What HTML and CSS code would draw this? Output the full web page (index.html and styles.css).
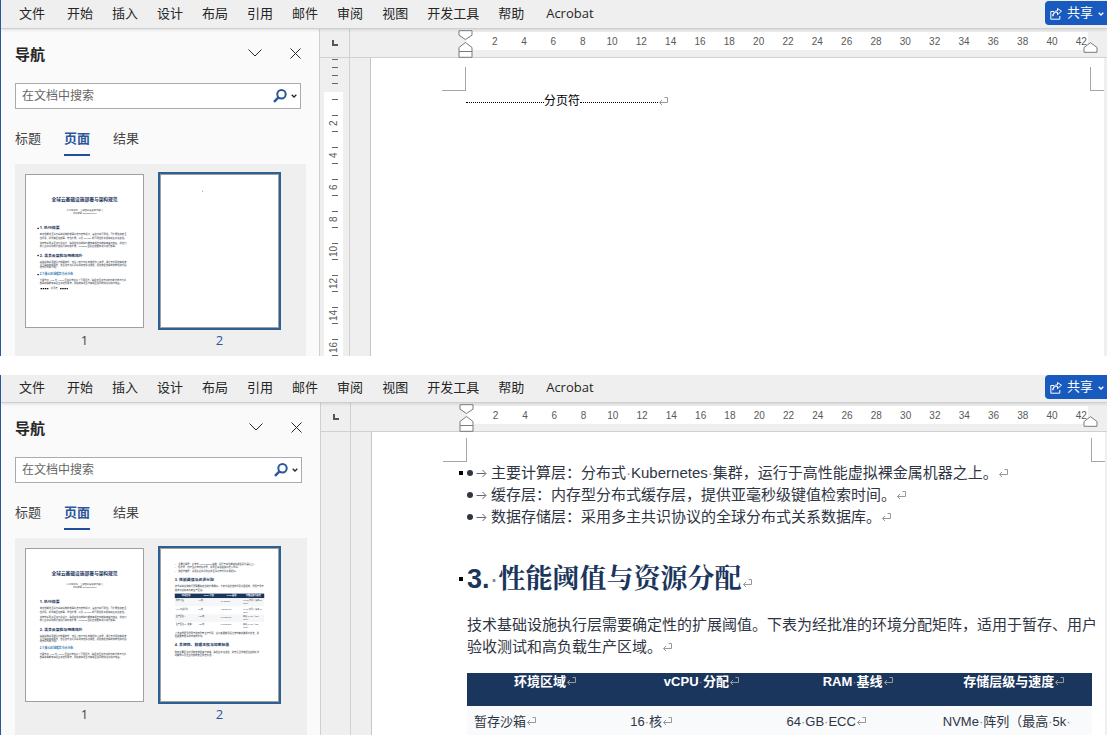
FILE: index.html
```html
<!DOCTYPE html>
<html lang="zh-CN">
<head>
  <meta charset="UTF-8">
  <meta name="viewport" content="width=device-width, initial-scale=1.0">
  <title>导航</title>
  <link rel="stylesheet" href="styles.css">
</head>
<body>
  <!-- Shared icons and the first page preview -->
  <svg class="defs" aria-hidden="true">
    <symbol id="return" viewBox="0 0 10 9">
      <path d="M6.500 .5h3v5h-8M4 3L1.500 5.500 4 8" fill="none" stroke="currentColor"/>
    </symbol>
    <symbol id="tab-arrow" viewBox="0 0 11 9">
      <path d="M.5 4.500h9M6.500 1l3.500 3.500L6.500 8" fill="none" stroke="currentColor"/>
    </symbol>
    <symbol id="chevron" viewBox="0 0 14 8">
      <path d="M.5 .5L7 7 13.500 .5" fill="none" stroke="currentColor"/>
    </symbol>
    <symbol id="caret" viewBox="0 0 6 4">
      <path d="M.7 .7L3 3 5.300 .7" fill="none" stroke="currentColor" stroke-width="1.300"/>
    </symbol>
    <symbol id="close" viewBox="0 0 11 11">
      <path d="M.5 .5l10 10M10.500 .5l-10 10" fill="none" stroke="currentColor"/>
    </symbol>
    <symbol id="search" viewBox="0 0 14 14">
      <circle cx="8.500" cy="5.300" r="4.200" fill="none" stroke="currentColor" stroke-width="2"/>
      <path d="M5.500 8.300L1 12.800" fill="none" stroke="currentColor" stroke-width="2.400"/>
    </symbol>
    <symbol id="share" viewBox="0 0 12 12">
      <path d="M4 3.500H.8v7.700h9V8M2.800 8.200c.3-2.700 2-4 4.700-4V6.700l4-3.500-4-2.700v2.200c-3 .2-4.500 2.300-4.700 5.500z" fill="none" stroke="currentColor"/>
    </symbol>
    <symbol id="indent-left" viewBox="0 0 15 28">
      <path d="M1 .7h13v4.500L7.500 9.500 1 5.200zM7.500 12.500L14 17.500v4H1v-4zM1 21.500h13v5.800H1z" fill="#fff" stroke="#7a7a7a"/>
    </symbol>
    <symbol id="indent-right" viewBox="0 0 15 11">
      <path d="M7.500 .7L14 5.500v4.800H1V5.500z" fill="#fff" stroke="#7a7a7a"/>
    </symbol>
    <symbol id="page-one" viewBox="0 0 816 1056">
      <g class="mini-heading">
        <text x="408" y="180" font-size="33" text-anchor="middle">全球云基础设施部署与架构规范</text>
        <text x="96" y="376" font-size="27">1. 执行摘要</text>
        <text x="96" y="567" font-size="27">2. 混合云架构与网络拓扑</text>
      </g>
      <text class="mini-subheading" x="96" y="697" font-size="20">2.1 核心区域服务节点分布</text>
      <g class="mini-text">
        <text x="408" y="252" text-anchor="middle" font-style="italic">企业级文档、全球基础设施架构部门</text>
        <text x="408" y="273" text-anchor="middle" font-style="italic">文档版本 Infrastructure</text>
        <text x="96" y="419">本文档概述全球云基础设施的部署标准与架构规范，旨在为高可用性、可扩展性和安全</text>
        <text x="96" y="447">性环境，提供跨区域部署、弹性扩展，以及 99.99% 的可用性服务保障和业务连续性。</text>
        <text x="96" y="479">该架构采用多区域冗余设计，确保在单点故障时能够实现自动故障转移与恢复，并支持</text>
        <text x="96" y="502">核心业务系统的持续运行和动态扩展，DevOps 团队应遵循本规范进行部署。</text>
        <text x="96" y="609">基础设施采用混合云部署模式，结合公有云与私有数据中心资源，通过专线网络实现安</text>
        <text x="96" y="630">全互联和数据同步，各区域节点之间采用加密隧道通信，保证数据传输的完整性和低延</text>
        <text x="96" y="650">迟访问与高可用。</text>
        <text x="96" y="734">计算节点 AWS 与 Azure 区域分布在多个可用区内，确保各区域节点的负载均衡与冗余</text>
        <text x="96" y="756">部署策略能够满足业务增长需求，并在故障发生时实现区域间的快速切换与恢复。</text>
      </g>
    </symbol>
  </svg>

  <!-- Window with the page break -->
  <section class="window">
    <header class="ribbon">
      <nav class="menu">
        <a href="#">文件</a>
        <a href="#">开始</a>
        <a href="#">插入</a>
        <a href="#">设计</a>
        <a href="#">布局</a>
        <a href="#">引用</a>
        <a href="#">邮件</a>
        <a href="#">审阅</a>
        <a href="#">视图</a>
        <a href="#">开发工具</a>
        <a href="#">帮助</a>
        <a href="#">Acrobat</a>
      </nav>
      <button class="share"><svg width="12" height="12"><use href="#share"/></svg>共享<svg width="6" height="4"><use href="#caret"/></svg></button>
    </header>

    <div class="workspace">
      <aside class="pane">
        <div class="pane-head">
          <h2>导航</h2>
          <button class="icon-button" aria-label="选项"><svg width="14" height="8"><use href="#chevron"/></svg></button>
          <button class="icon-button" aria-label="关闭"><svg width="11" height="11"><use href="#close"/></svg></button>
        </div>
        <div class="search">
          <input type="text" placeholder="在文档中搜索" aria-label="在文档中搜索">
          <button class="search-button" aria-label="搜索"><svg width="14" height="14"><use href="#search"/></svg></button>
          <button class="search-more" aria-label="搜索选项"><svg width="6" height="4"><use href="#caret"/></svg></button>
        </div>
        <div class="tabs" role="tablist">
          <button role="tab" class="tab">标题</button>
          <button role="tab" class="tab active" aria-selected="true">页面</button>
          <button role="tab" class="tab">结果</button>
        </div>
        <div class="thumbs">
          <figure class="thumb">
            <svg class="sheet" viewBox="0 0 816 1056">
              <use href="#page-one"/>
              <g fill="#000">
                <rect x="80" y="366" width="9" height="9"/>
                <rect x="80" y="555" width="9" height="9"/>
                <rect x="80" y="688" width="9" height="9"/>
              </g>
              <path d="M102 790h54M238 790h54" stroke="#000" stroke-width="9" stroke-dasharray="10 5"/>
              <text class="mini-text" x="172" y="796">分页符</text>
            </svg>
            <figcaption>1</figcaption>
          </figure>
          <figure class="thumb current">
            <svg class="sheet" viewBox="0 0 816 1056">
              <rect x="286" y="108" width="8" height="6" fill="#888"/>
            </svg>
            <figcaption>2</figcaption>
          </figure>
        </div>
      </aside>

      <main class="editor">
        <div class="tab-stop"><i></i></div>
        <div class="ruler">
          <ol class="ruler-track">
            <li>2</li><li>4</li><li>6</li><li>8</li><li>10</li><li>12</li><li>14</li>
            <li>16</li><li>18</li><li>20</li><li>22</li><li>24</li><li>26</li><li>28</li>
            <li>30</li><li>32</li><li>34</li><li>36</li><li>38</li><li>40</li><li>42</li>
          </ol>
          <svg class="indent-left" width="15" height="28"><use href="#indent-left"/></svg>
          <svg class="indent-right" width="15" height="11"><use href="#indent-right"/></svg>
        </div>
        <div class="side-ruler">
          <div class="side-margin"></div>
          <ol class="side-track">
            <li>2</li>
            <li>4</li>
            <li>6</li>
            <li>8</li>
            <li>10</li>
            <li>12</li>
            <li>14</li>
            <li>16</li>
          </ol>
        </div>
        <div class="canvas">
          <article class="page">
            <div class="crop-marks"><i class="crop left"></i><i class="crop right"></i></div>
            <div class="content">
              <p class="page-break"><span>分页符</span><svg class="mark" width="10" height="9"><use href="#return"/></svg></p>
            </div>
          </article>
        </div>
      </main>
    </div>
  </section>

  <!-- Window with the following page -->
  <section class="window second">
    <header class="ribbon">
      <nav class="menu">
        <a href="#">文件</a>
        <a href="#">开始</a>
        <a href="#">插入</a>
        <a href="#">设计</a>
        <a href="#">布局</a>
        <a href="#">引用</a>
        <a href="#">邮件</a>
        <a href="#">审阅</a>
        <a href="#">视图</a>
        <a href="#">开发工具</a>
        <a href="#">帮助</a>
        <a href="#">Acrobat</a>
      </nav>
      <button class="share"><svg width="12" height="12"><use href="#share"/></svg>共享<svg width="6" height="4"><use href="#caret"/></svg></button>
    </header>

    <div class="workspace">
      <aside class="pane">
        <div class="pane-head">
          <h2>导航</h2>
          <button class="icon-button" aria-label="选项"><svg width="14" height="8"><use href="#chevron"/></svg></button>
          <button class="icon-button" aria-label="关闭"><svg width="11" height="11"><use href="#close"/></svg></button>
        </div>
        <div class="search">
          <input type="text" placeholder="在文档中搜索" aria-label="在文档中搜索">
          <button class="search-button" aria-label="搜索"><svg width="14" height="14"><use href="#search"/></svg></button>
          <button class="search-more" aria-label="搜索选项"><svg width="6" height="4"><use href="#caret"/></svg></button>
        </div>
        <div class="tabs" role="tablist">
          <button role="tab" class="tab">标题</button>
          <button role="tab" class="tab active" aria-selected="true">页面</button>
          <button role="tab" class="tab">结果</button>
        </div>
        <div class="thumbs">
          <figure class="thumb">
            <svg class="sheet" viewBox="0 0 816 1056"><use href="#page-one"/></svg>
            <figcaption>1</figcaption>
          </figure>
          <figure class="thumb current">
            <svg class="sheet" viewBox="0 0 816 1056">
              <g class="mini-text">
                <text x="96" y="113">•</text><text x="120" y="113">主要计算层：分布式 Kubernetes 集群，运行于高性能虚拟裸金属机器之上。</text>
                <text x="96" y="132">•</text><text x="120" y="132">缓存层：内存型分布式缓存层，提供亚毫秒级键值检索时间。</text>
                <text x="96" y="158">•</text><text x="120" y="158">数据存储层：采用多主共识协议的全球分布式关系数据库。</text>
                <text x="96" y="262">技术基础设施执行层需要确定性的扩展阈值。下表为经批准的环境分配矩阵，适用于暂存</text>
                <text x="96" y="289">验收测试和高负载生产区域。</text>
              </g>
              <rect x="96" y="309" width="624" height="32" fill="#1b365d"/>
              <path d="M96 341h624v56H96zM96 453h624v54H96z" fill="#f5f6f8"/>
              <g fill="#fff" font-size="15" font-weight="700">
                <text x="145" y="325">环境区域</text><text x="296" y="325">vCPU 分配</text>
                <text x="458" y="325">RAM 基线</text><text x="592" y="325">存储层级与速度</text>
              </g>
              <g class="mini-text mini-cells">
                <text x="103" y="364">暂存沙箱</text><text x="260" y="364">16 核</text><text x="416" y="370">64 GB ECC</text><text x="572" y="364">NVMe 阵列（最高 5k</text><text x="572" y="385">IOPS）</text>
                <text x="103" y="420">UAT 测试环境</text><text x="260" y="420">32 核</text><text x="416" y="426">128 GB ECC</text><text x="572" y="420">NVMe 阵列（最高 9k</text><text x="572" y="441">IOPS）</text>
                <text x="103" y="474">生产区域 A</text><text x="260" y="474">128 核</text><text x="416" y="480">512 GB ECC</text><text x="572" y="474">高速 NVMe（50k</text><text x="572" y="495">IOPS）</text>
                <text x="103" y="525">生产区域 B（灾备）</text><text x="260" y="525">128 核</text><text x="416" y="531">512 GB ECC</text><text x="572" y="525">高速 NVMe（50k</text><text x="572" y="546">IOPS）</text>
              </g>
              <g class="mini-text">
                <text x="96" y="591">上述资源配置适用于所有受管生产环境，任何变更都须经过架构审批委员会批准，并</text>
                <text x="96" y="612">在变更管理系统中完成登记。</text>
                <text x="96" y="721">所有主要区域必须制定数据备份策略，确保业务连续性，并符合当地数据主权隐私法</text>
                <text x="96" y="742">规要求以及企业内部的安全加密标准。</text>
              </g>
              <g class="mini-heading" font-size="27">
                <text x="96" y="224">3. 性能阈值与资源分配</text>
                <text x="96" y="677">4. 合规性、数据主权与加密标准</text>
              </g>
            </svg>
            <figcaption>2</figcaption>
          </figure>
        </div>
      </aside>

      <main class="editor">
        <div class="tab-stop"><i></i></div>
        <div class="ruler">
          <ol class="ruler-track">
            <li>2</li><li>4</li><li>6</li><li>8</li><li>10</li><li>12</li><li>14</li>
            <li>16</li><li>18</li><li>20</li><li>22</li><li>24</li><li>26</li><li>28</li>
            <li>30</li><li>32</li><li>34</li><li>36</li><li>38</li><li>40</li><li>42</li>
          </ol>
          <svg class="indent-left" width="15" height="28"><use href="#indent-left"/></svg>
          <svg class="indent-right" width="15" height="11"><use href="#indent-right"/></svg>
        </div>
        <div class="side-ruler"></div>
        <div class="canvas">
          <article class="page">
            <div class="crop-marks"><i class="crop left"></i><i class="crop right"></i></div>
            <div class="content">
              <ul class="bullets">
                <li class="marked"><svg class="arrow" width="11" height="9"><use href="#tab-arrow"/></svg><span>主要计算层：分布式<b class="dot">·</b>Kubernetes<b class="dot">·</b>集群，运行于高性能虚拟裸金属机器之上。<svg class="mark" width="10" height="9"><use href="#return"/></svg></span></li>
                <li><svg class="arrow" width="11" height="9"><use href="#tab-arrow"/></svg><span>缓存层：内存型分布式缓存层，提供亚毫秒级键值检索时间。<svg class="mark" width="10" height="9"><use href="#return"/></svg></span></li>
                <li><svg class="arrow" width="11" height="9"><use href="#tab-arrow"/></svg><span>数据存储层：采用多主共识协议的全球分布式关系数据库。<svg class="mark" width="10" height="9"><use href="#return"/></svg></span></li>
              </ul>
              <h1 class="marked">3.<b class="dot">·</b>性能阈值与资源分配<svg class="mark" width="10" height="9"><use href="#return"/></svg></h1>
              <p class="body-text">技术基础设施执行层需要确定性的扩展阈值。下表为经批准的环境分配矩阵，适用于暂存、用户<br>验收测试和高负载生产区域。<svg class="mark" width="10" height="9"><use href="#return"/></svg></p>
              <table>
                <thead>
                  <tr>
                    <th>环境区域<svg class="mark" width="10" height="9"><use href="#return"/></svg></th>
                    <th>vCPU<b class="dot">·</b>分配<svg class="mark" width="10" height="9"><use href="#return"/></svg></th>
                    <th>RAM<b class="dot">·</b>基线<svg class="mark" width="10" height="9"><use href="#return"/></svg></th>
                    <th>存储层级与速度<svg class="mark" width="10" height="9"><use href="#return"/></svg></th>
                  </tr>
                </thead>
                <tbody>
                  <tr>
                    <td>暂存沙箱<svg class="mark" width="10" height="9"><use href="#return"/></svg></td>
                    <td>16<b class="dot">·</b>核<svg class="mark" width="10" height="9"><use href="#return"/></svg></td>
                    <td>64<b class="dot">·</b>GB<b class="dot">·</b>ECC<svg class="mark" width="10" height="9"><use href="#return"/></svg></td>
                    <td>NVMe<b class="dot">·</b>阵列（最高<b class="dot">·</b>5k<b class="dot">·</b></td>
                  </tr>
                </tbody>
              </table>
            </div>
          </article>
        </div>
      </main>
    </div>
  </section>
</body>
</html>
```

FILE: styles.css
```css
* {
  box-sizing: border-box;
}
body {
  margin: 0;
  height: 100vh;
  display: grid;
  grid-template-rows: 356fr 360fr;
  gap: 19px;
  overflow: hidden;
  background: #fff;
  color: #262626;
  font-family: "Open Sans", "Noto Sans CJK SC", sans-serif;
  font-size: 13px;
}
h1, h2, p, ul, ol, figure {
  margin: 0;
  padding: 0;
}
ol, ul {
  list-style: none;
}
button {
  padding: 0;
  border: none;
  background: none;
  color: inherit;
  font: inherit;
  cursor: pointer;
}
.defs {
  position: absolute;
  width: 0;
  height: 0;
}

/* Window */
.window {
  --pane-width: 319px;
  --ribbon-height: 29px;
  --menu-line: 26px;
  --page-top: 9px;
  display: flex;
  flex-direction: column;
  min-height: 0;
  overflow: hidden;
  border-left: 1px solid #2b579a;
  background: #efefef;
}
.window.second {
  --pane-width: 320px;
  --ribbon-height: 28px;
  --menu-line: 24px;
  --page-top: 6px;
}
.ribbon {
  position: relative;
  flex: none;
  display: flex;
  justify-content: space-between;
  align-items: flex-start;
  height: var(--ribbon-height);
  border-bottom: 1px solid #cfcfcf;
  box-shadow: 0 1px 3px rgba(0, 0, 0, 0.12);
  background: #efefef;
}
.menu {
  display: flex;
  gap: 19px;
  padding-left: 18px;
  line-height: var(--menu-line);
}
.menu a {
  color: #262626;
  text-decoration: none;
  white-space: nowrap;
}
.menu a:first-child {
  padding-right: 3px;
}
.menu a:last-child {
  padding-left: 3px;
}
.share {
  display: flex;
  align-items: center;
  gap: 5px;
  height: 24px;
  margin-top: 1px;
  padding: 0 3px 3px 5px;
  border-radius: 4px 0 0 4px;
  background: #185abd;
  color: #fff;
}
.share svg {
  margin-top: 4px;
}
.second .share {
  margin-top: 0;
}
.workspace {
  flex: 1;
  display: grid;
  grid-template-columns: var(--pane-width) 1fr;
  min-height: 0;
}

/* Navigation pane */
.pane {
  padding: 13px 13px 0 14px;
  border-right: 1px solid #d0d0d0;
  background: #fafafa;
  overflow: hidden;
}
.pane-head {
  display: flex;
  align-items: center;
  gap: 28px;
  height: 24px;
  padding-right: 5px;
}
.pane-head h2 {
  flex: 1;
  font-size: 15px;
  line-height: 24px;
}
.icon-button {
  display: flex;
  margin-bottom: 2px;
}
.search {
  display: flex;
  align-items: center;
  height: 26px;
  margin: 17px 5px 0 0;
  padding-right: 3px;
  border: 1px solid #ababab;
  background: #fff;
}
.search input {
  flex: 1;
  min-width: 0;
  padding: 0 6px 3px;
  border: none;
  outline: none;
  background: none;
  font: 12px/20px "Noto Sans CJK SC", sans-serif;
}
.search input::placeholder {
  color: #666;
}
.search button {
  display: flex;
}
.search-button {
  margin-right: 4px;
  color: #2b579a;
}
.tabs {
  display: flex;
  gap: 23px;
  margin: 19px 0 8px;
}
.tab {
  padding-bottom: 6px;
  border-bottom: 2px solid transparent;
  line-height: 20px;
  font-size: 13px;
  color: #444;
}
.tab.active {
  border-color: #1f4e9c;
  color: #2b579a;
  font-weight: 700;
}
.thumbs {
  display: flex;
  gap: 8px;
  height: 100%;
  padding: 6px 6px 0;
  background: #efefef;
}
.thumb {
  flex: none;
  padding: 4px;
  text-align: center;
}
.sheet {
  display: block;
  width: 119px;
  height: 154px;
  border: 1px solid #a0a0a0;
  background: #fff;
}
.thumb.current .sheet {
  outline: 2px solid #2d6092;
}
.thumb figcaption {
  margin-top: 2px;
  line-height: 20px;
  color: #444;
}
.thumb.current figcaption {
  color: #2b579a;
}
.mini-text {
  fill: #2f3542;
  font-size: 16px;
}
.mini-cells {
  font-size: 14px;
}
.mini-heading {
  fill: #1b365d;
  font-weight: 700;
}
.mini-subheading {
  fill: #2e75b6;
  font-weight: 700;
}

/* Editor with rulers */
.editor {
  display: grid;
  grid-template-columns: 30px 1fr;
  grid-template-rows: 29px 1fr;
  min-width: 0;
  min-height: 0;
}
.tab-stop {
  display: flex;
  justify-content: center;
  align-items: center;
  border-right: 1px solid #d0d0d0;
  border-bottom: 1px solid #d0d0d0;
}
.tab-stop i {
  width: 6px;
  height: 6px;
  border-left: 2px solid #555;
  border-bottom: 2px solid #555;
}
.ruler {
  position: relative;
  padding: 3px 19px 0 116px;
  border-bottom: 1px solid #d0d0d0;
}
.ruler-track {
  display: grid;
  grid-template-columns: repeat(21, 1fr);
  height: 18px;
  padding-left: 14px;
  margin-right: -8px;
  background: linear-gradient(#fff, #fff) no-repeat 0 0 / calc(100% - 8px) 100%;
  color: #595959;
  font: 10px/19px "Liberation Sans", sans-serif;
  text-align: center;
}
.indent-left {
  position: absolute;
  left: 108px;
  top: 1px;
}
.indent-right {
  position: absolute;
  right: 9px;
  top: 13px;
}
.side-ruler {
  min-height: 0;
  overflow: hidden;
  padding: 0 6px 0 4px;
  border-right: 1px solid #d0d0d0;
}
.side-margin {
  height: 34px;
  background: repeating-linear-gradient(transparent 0 1px, #666 1px 2px, transparent 2px 8px) no-repeat 8px 0 / 6px 28px;
}
.side-track {
  padding-top: 15px;
  background: linear-gradient(#666, #666) no-repeat 8px 7px / 6px 1px, #fff;
}
/* Rotated half a turn, so the ticks are placed from the lower right */
.side-track li {
  display: flex;
  align-items: center;
  justify-content: center;
  width: 19px;
  height: 32px;
  background:
    linear-gradient(#666, #666) no-repeat 5px 7px / 6px 1px,
    linear-gradient(#666, #666) no-repeat 5px 23px / 6px 1px;
  color: #595959;
  font: 10px/12px "Liberation Sans", sans-serif;
  writing-mode: vertical-rl;
  transform: rotate(180deg);
}
.canvas {
  min-width: 0;
  min-height: 0;
  padding: 0 3px 0 20px;
  overflow: hidden;
}
.second .canvas {
  padding-right: 2px;
}

/* Document page */
.page {
  height: 100%;
  padding-top: var(--page-top);
  border-left: 1px solid #c6c6c6;
  background: #fff;
  color: #2f3542;
  font-family: "Liberation Sans", "Noto Sans CJK SC", sans-serif;
}
.crop-marks {
  display: flex;
  justify-content: space-between;
  padding-left: 71px;
}
.crop {
  height: 24px;
  border-bottom: 1px solid #a6a6a6;
}
.crop.left {
  width: 24px;
  border-right: 1px solid #a6a6a6;
}
.crop.right {
  width: 14px;
  border-left: 1px solid #a6a6a6;
}
.content {
  padding: 0 13px 0 95px;
}
.mark {
  color: #999;
}
.dot {
  color: #8a8a8a;
  font-weight: 400;
}
.page-break {
  display: flex;
  align-items: center;
  width: 202px;
  line-height: 20px;
  font-size: 12px;
  color: #000;
}
.page-break::before,
.page-break::after {
  content: "";
  flex: 1;
  margin-top: 3px;
  border-top: 1px dotted #000;
}
.page-break::after {
  order: 1;
}
.page-break .mark {
  order: 2;
}
/* Square beside a paragraph kept with the next one */
.marked {
  position: relative;
}
.marked::after {
  content: "";
  position: absolute;
  left: -8px;
  top: calc(50% - 2px);
  width: 4px;
  height: 4px;
  background: #000;
}
.bullets li {
  display: flex;
  align-items: center;
  font-size: 15px;
  line-height: 22px;
  white-space: nowrap;
}
.bullets li::before {
  content: "";
  width: 6px;
  height: 6px;
  border-radius: 50%;
  background: #2f3542;
}
.arrow {
  margin: 0 4px 0 3px;
  color: #666;
}
.page h1 {
  margin-top: 33px;
  color: #1b365d;
  font-family: "Liberation Sans", "Noto Serif CJK SC", "Noto Sans CJK SC", sans-serif;
  font-size: 27px;
  line-height: 36px;
  white-space: nowrap;
}
.body-text {
  margin: 17px 0 15px;
  font-size: 15px;
  line-height: 22px;
  white-space: nowrap;
}
table {
  width: 100%;
  table-layout: fixed;
  border-collapse: collapse;
  font-size: 13px;
  line-height: 18px;
}
th {
  height: 33px;
  padding: 0;
  background: #1b365d;
  color: #fff;
  vertical-align: top;
}
td {
  padding: 7px 7px 14px;
  background: #f8fafc;
  vertical-align: top;
  white-space: nowrap;
}
```
